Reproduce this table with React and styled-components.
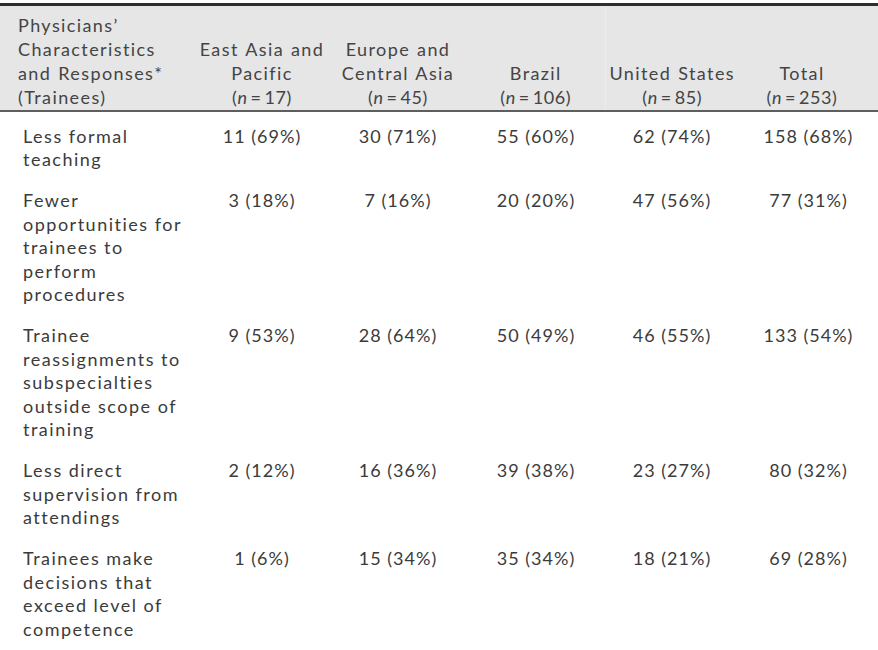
import React from "react";
import styled, { createGlobalStyle } from "styled-components";

const Global = createGlobalStyle`
  html, body { margin: 0; padding: 0; background: #ffffff; }
  body { font-family: "Lato", "Noto Sans", sans-serif; color: #3b3b3b; }
`;

const Page = styled.div`
  width: 878px;
  padding-top: 3px;
`;

const Table = styled.table`
  width: 878px;
  border-collapse: collapse;
  table-layout: fixed;
  font-size: 18px;
  color: #3b3b3b;
`;

const Head = styled.thead`
  background: #e6e6e7;
  & tr {
    border-top: 3px solid #2e2e2e;
    border-bottom: 2px solid #5e5e5e;
  }
`;

const HeadCell = styled.th`
  font-weight: 400;
  line-height: 24px;
  letter-spacing: 1.4px;
  word-spacing: 1px;
  vertical-align: bottom;
  text-align: ${(p) => (p.$left ? "left" : "center")};
  padding: 7px ${(p) => p.$pr || 0}px 1px ${(p) => (p.$left ? 18 : 0)}px;
  border-left: ${(p) => (p.$divider ? "1px solid #ededee" : "none")};
  color: #444;
  white-space: nowrap;
`;

const Count = styled.span`
  letter-spacing: 0.6px;
  word-spacing: 0;
`;

const Row = styled.tr`
  & td {
    padding-top: ${(p) => (p.$first ? 12.5 : 8.75)}px;
  }
`;

const Cell = styled.td`
  line-height: 23.5px;
  vertical-align: top;
  padding: 8.75px 0 8.75px ${(p) => (p.$left ? 23 : 0)}px;
  text-align: ${(p) => (p.$left ? "left" : "center")};
  letter-spacing: ${(p) => (p.$left ? 1.5 : 1)}px;
  white-space: nowrap;
`;

const N = ({ v }) => (
  <Count>
    (<i>n</i>&thinsp;=&thinsp;{v})
  </Count>
);

const rows = [
  { label: ["Less formal", "teaching"], vals: ["11 (69%)", "30 (71%)", "55 (60%)", "62 (74%)", "158 (68%)"] },
  {
    label: ["Fewer", "opportunities for", "trainees to", "perform", "procedures"],
    vals: ["3 (18%)", "7 (16%)", "20 (20%)", "47 (56%)", "77 (31%)"],
  },
  {
    label: ["Trainee", "reassignments to", "subspecialties", "outside scope of", "training"],
    vals: ["9 (53%)", "28 (64%)", "50 (49%)", "46 (55%)", "133 (54%)"],
  },
  {
    label: ["Less direct", "supervision from", "attendings"],
    vals: ["2 (12%)", "16 (36%)", "39 (38%)", "23 (27%)", "80 (32%)"],
  },
  {
    label: ["Trainees make", "decisions that", "exceed level of", "competence"],
    vals: ["1 (6%)", "15 (34%)", "35 (34%)", "18 (21%)", "69 (28%)"],
  },
];

const Lines = ({ lines }) =>
  lines.map((l, i) => (
    <React.Fragment key={i}>
      {i > 0 && <br />}
      {l}
    </React.Fragment>
  ));

export default function App() {
  return (
    <Page>
      <Global />
      <Table>
        <colgroup>
          <col style={{ width: 195 }} />
          <col style={{ width: 134 }} />
          <col style={{ width: 138 }} />
          <col style={{ width: 138 }} />
          <col style={{ width: 134 }} />
          <col style={{ width: 139 }} />
        </colgroup>
        <Head>
          <tr>
            <HeadCell $left>
              <Lines lines={["Physicians’", "Characteristics", "and Responses*", "(Trainees)"]} />
            </HeadCell>
            <HeadCell>
              East Asia and
              <br />
              Pacific
              <br />
              <N v="17" />
            </HeadCell>
            <HeadCell>
              Europe and
              <br />
              Central Asia
              <br />
              <N v="45" />
            </HeadCell>
            <HeadCell>
              Brazil
              <br />
              <N v="106" />
            </HeadCell>
            <HeadCell $divider>
              United States
              <br />
              <N v="85" />
            </HeadCell>
            <HeadCell $pr={13}>
              Total
              <br />
              <N v="253" />
            </HeadCell>
          </tr>
        </Head>
        <tbody>
          {rows.map((r, i) => (
            <Row key={i} $first={i === 0}>
              <Cell $left>
                <Lines lines={r.label} />
              </Cell>
              {r.vals.map((v, j) => (
                <Cell key={j}>{v}</Cell>
              ))}
            </Row>
          ))}
        </tbody>
      </Table>
    </Page>
  );
}
